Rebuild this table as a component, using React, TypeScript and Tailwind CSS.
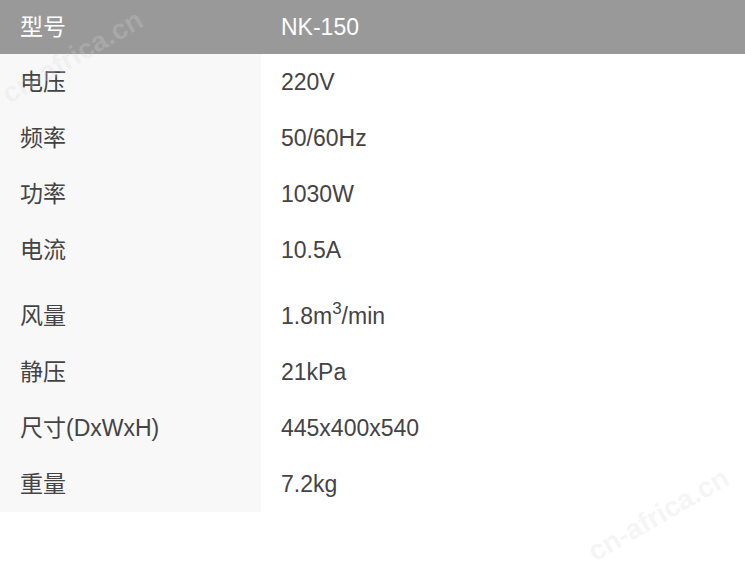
import React from 'react';

const rows: { label: string; value: React.ReactNode }[] = [
  { label: '电压', value: '220V' },
  { label: '频率', value: '50/60Hz' },
  { label: '功率', value: '1030W' },
  { label: '电流', value: '10.5A' },
  {
    label: '风量',
    value: (
      <>
        1.8m<sup className="text-[17px] top-[-0.55em]">3</sup>/min
      </>
    ),
  },
  { label: '静压', value: '21kPa' },
  { label: '尺寸(DxWxH)', value: '445x400x540' },
  { label: '重量', value: '7.2kg' },
];

export default function App() {
  return (
    <div
      className="relative w-[745px] h-[567px] overflow-hidden bg-white text-[23px] text-[#444]"
      style={{ fontFamily: '"Liberation Sans", Arial, "Noto Sans CJK SC", sans-serif' }}
    >
      <table className="w-full border-collapse">
        <thead>
          <tr className="h-[54px] bg-[#999] text-white">
            <th className="w-[261px] pl-5 text-left font-normal">型号</th>
            <th className="pl-5 text-left font-normal">NK-150</th>
          </tr>
        </thead>
        <tbody>
          {rows.map((r) => {
            const tall = r.label === '风量';
            return (
              <tr key={r.label} className={tall ? 'h-[66px]' : 'h-[56px]'}>
                <td className={`w-[261px] bg-[#f8f8f8] pl-5 ${tall ? 'pt-[10px]' : ''}`}>{r.label}</td>
                <td className={`pl-5 ${tall ? 'pt-[10px]' : ''}`}>{r.value}</td>
              </tr>
            );
          })}
        </tbody>
      </table>

      {/* watermarks */}
      <div className="pointer-events-none absolute left-[-6px] top-[36px] -rotate-[30deg] whitespace-nowrap text-[28px] font-bold text-[#d8d8d8]/25">
        cn-africa.cn
      </div>
      <div className="pointer-events-none absolute left-[580px] top-[494px] -rotate-[30deg] whitespace-nowrap text-[28px] font-bold text-[#d8d8d8]/25">
        cn-africa.cn
      </div>
    </div>
  );
}
